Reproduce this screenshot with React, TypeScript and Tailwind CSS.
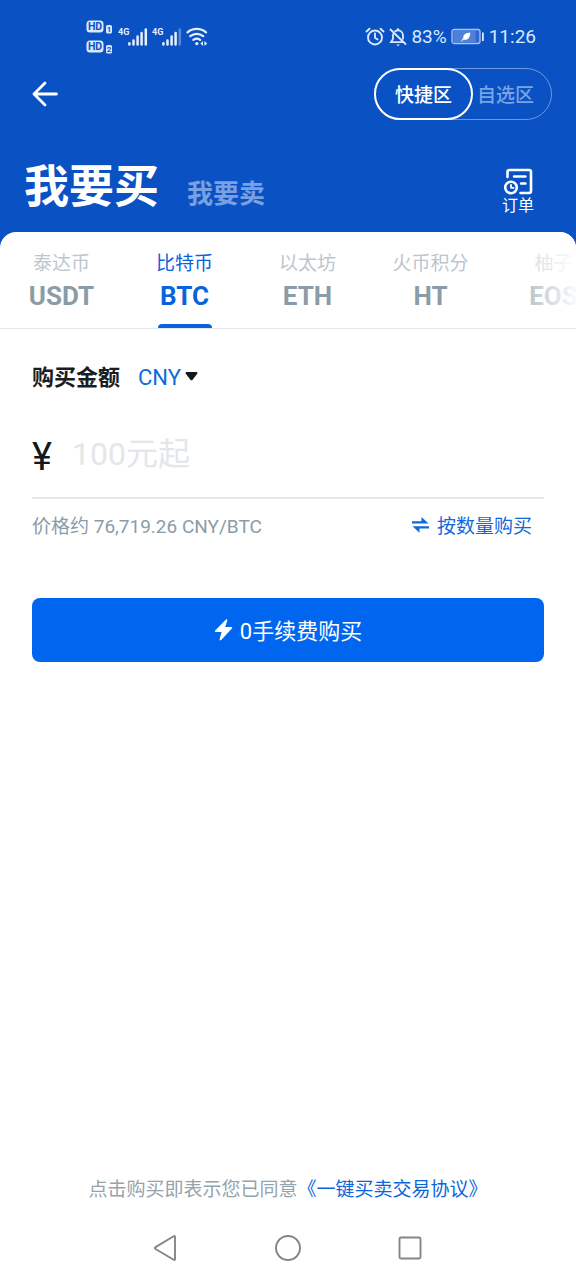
import { useState } from 'react';
import clsx from 'clsx';

const COINS = [
  { name: '泰达币', code: 'USDT' },
  { name: '比特币', code: 'BTC' },
  { name: '以太坊', code: 'ETH' },
  { name: '火币积分', code: 'HT' },
  { name: '柚子', code: 'EOS' },
];

function HdBadge({ sim }: { sim: string }) {
  return (
    <svg width="28" height="14" viewBox="0 0 28 14" aria-label={`HD ${sim}`}>
      <rect x="0.5" y="0.5" width="17" height="12" rx="3.5" fill="#dbe8ff" />
      <text x="9" y="10.4" textAnchor="middle" fontSize="10.5" fontWeight="700" fill="#0a52c4">
        HD
      </text>
      <rect x="20" y="5" width="6" height="8.5" rx="1.5" fill="#dbe8ff" />
      <text x="23" y="12" textAnchor="middle" fontSize="8" fontWeight="700" fill="#0a52c4">
        {sim}
      </text>
    </svg>
  );
}

function Signal({ weak }: { weak?: boolean }) {
  return (
    <svg width="30" height="20" viewBox="0 0 30 20" fill="none" stroke="#e6efff" strokeWidth="2.5" strokeLinecap="round">
      <text x="0" y="8" fontSize="9" fontWeight="700" fill="#e6efff" stroke="none">
        4G
      </text>
      <path d="M11.4 17.4v-1.2M15.5 17.4v-4M19.6 17.4V9.6M23.6 17.4V6" />
      <path d="M27.8 17.4V2.4" opacity={weak ? 0.35 : 1} />
    </svg>
  );
}

function StatusBar() {
  return (
    <div className="flex h-[74px] items-center justify-between pr-10 pl-[86px]">
      <div className="flex items-center">
        <div className="flex flex-col gap-1.5 pr-1">
          <HdBadge sim="1" />
          <HdBadge sim="2" />
        </div>
        <div className="flex items-center gap-1">
          <Signal />
          <Signal weak />
          <svg width="24" height="20" viewBox="0 0 24 20" fill="none" stroke="#e6efff" strokeWidth="2.2" strokeLinecap="round">
            <path d="M1.5 5.4a14 14 0 0 1 18.5 0M4.3 9.2a10 10 0 0 1 12.9 0M7.4 12.8a5.6 5.6 0 0 1 6.7 0" />
            <circle cx="10.8" cy="16.6" r="1.7" fill="#e6efff" stroke="none" />
            <path d="M17 14v5l-2.6-2.4zM18.4 19v-5l2.8 2.6z" fill="#e6efff" stroke="none" />
          </svg>
        </div>
      </div>

      <div className="flex items-center gap-1 text-[19px] text-[#dbe8ff]">
        <svg width="20" height="20" viewBox="0 0 20 20" fill="none" stroke="currentColor" strokeWidth="1.9" strokeLinecap="round">
          <circle cx="10" cy="10.5" r="7" />
          <path d="M10 6.5v4.2l2.6 1.8M1.5 4.5l3-2.8M18.5 4.5l-3-2.8" />
        </svg>
        <svg width="18" height="20" viewBox="0 0 18 20" fill="none" stroke="currentColor" strokeWidth="1.8" strokeLinecap="round">
          <path d="M4 7.5V12l-2 3.2h11.5M6.2 4.2A5 5 0 0 1 14 7.8v4M9 1.8v1M1.5 2.5l15 14.5" />
          <path d="M7.2 17.4h3.6L9 19.2z" fill="currentColor" stroke="none" />
        </svg>
        <span>83%</span>
        <svg width="34" height="18" viewBox="0 0 34 18">
          <rect x="1" y="1.5" width="28" height="14" rx="2" fill="#2f69cf" stroke="#a9c4f2" strokeWidth="1.3" />
          <rect x="2.5" y="3" width="22" height="11" fill="#5080d8" />
          <path d="M31 4.5h1.8v8.5H31z" fill="#dbe8ff" />
          <path d="M10.3 13.300c.4-1.200 1-2.200 2-3.200-.4-3.400 2.200-5.400 7-5.400-.2 4.400-1.800 7.300-5.600 7-.9-.1-1.400-.1-1.800.1l-.8 1.800z" fill="#fff" />
        </svg>
        <span>11:26</span>
      </div>
    </div>
  );
}

function Header() {
  const [zone, setZone] = useState('fast');

  return (
    <header className="bg-[#0a52c4] pb-4">
      <StatusBar />

      <div className="-mt-1.5 flex items-center justify-between pr-6 pl-8">
        <button aria-label="返回" className="text-white">
          <svg width="26" height="26" viewBox="0 0 26 26" fill="none" stroke="currentColor" strokeWidth="2.8" strokeLinecap="round" strokeLinejoin="round">
            <path d="M13 2 2 13l11 11M2 13h22.500" />
          </svg>
        </button>
        <div className="flex h-[52px] rounded-full border border-[#6c98e0] text-[19px] font-medium">
          <button
            onClick={() => setZone('fast')}
            className={clsx(
              '-m-px rounded-full border-2 px-[19px] pt-1',
              zone === 'fast' ? 'border-white text-white' : 'border-transparent text-[#7ba3e6]',
            )}
          >
            快捷区
          </button>
          <button
            onClick={() => setZone('self')}
            className={clsx(
              '-m-px rounded-full border-2 pt-1 pr-4 pl-1',
              zone === 'self' ? 'border-white text-white' : 'border-transparent text-[#7ba3e6]',
            )}
          >
            自选区
          </button>
        </div>
      </div>

      {/* Купить / продать и заказы */}
      <div className="mt-10 flex items-end justify-between pr-[42px] pl-6">
        <div className="flex items-baseline gap-7">
          <button className="text-[45px] leading-[56px] font-bold text-white">我要买</button>
          <button className="text-[26px] leading-8 font-bold text-[#78a0e2]">我要卖</button>
        </div>
        <button className="flex flex-col items-center text-base leading-5 text-white">
          <svg width="30" height="28" viewBox="0 0 30 28" fill="none" stroke="currentColor" strokeWidth="2.6" strokeLinecap="round" strokeLinejoin="round">
            <path d="M4.500 9V4a2 2 0 0 1 2-2h19.500a2 2 0 0 1 2 2v19a2 2 0 0 1-2 2H17.500" />
            <path d="M11 8.500h11.500M18 15.500h4.500" strokeWidth="2.4" />
            <circle cx="8" cy="19.500" r="5.800" />
            <path d="M8 17v2.800h2.600" strokeWidth="1.8" />
          </svg>
          订单
        </button>
      </div>
    </header>
  );
}

export default function App() {
  const [coin, setCoin] = useState('BTC');
  const [amount, setAmount] = useState('');

  return (
    <div className="flex min-h-screen flex-col bg-white font-[Roboto,'Noto_Sans_CJK_SC',sans-serif]">
      <Header />

      <div className="bg-[#0a52c4]">
        <nav className="relative flex overflow-hidden rounded-t-2xl border-b border-[#e6e9ec] bg-white">
          {COINS.map(({ name, code }) => (
            <button
              key={code}
              onClick={() => setCoin(code)}
              className={clsx(
                'flex w-[123px] shrink-0 flex-col items-center pt-[18px]',
                coin === code ? 'text-[#0a63dc]' : 'text-[#8a9ca8]',
              )}
            >
              <span className={clsx('text-[19px] leading-7', coin !== code && 'text-[#bdc6cd]')}>{name}</span>
              <span className="text-[26px] leading-9 font-bold">{code}</span>
              <span className={clsx('mt-2.5 h-1 w-[54px] rounded-t-sm', coin === code && 'bg-[#0a63dc]')} />
            </button>
          ))}
          <div className="pointer-events-none absolute inset-y-0 right-0 w-12 bg-linear-to-r from-white/40 to-white/95" />
        </nav>
      </div>

      <main className="flex grow flex-col px-8 pt-[33px]">
        <div className="flex items-center gap-[18px] text-[22px] leading-8">
          <label htmlFor="amount" className="font-bold text-[#1a1e24]">购买金额</label>
          <div className="relative">
            <select aria-label="货币" className="w-[60px] appearance-none bg-transparent text-[#0a6ae0] outline-none">
              <option>CNY</option>
            </select>
            <svg className="pointer-events-none absolute top-2.5 right-0" width="13" height="9" viewBox="0 0 13 9" fill="#14181d">
              <path d="M1.600 0h9.800c1 0 1.400 1.100.8 1.800L7.600 7.800c-.6.700-1.600.7-2.200 0L.8 1.800C.2 1.100.6 0 1.600 0z" />
            </svg>
          </div>
        </div>

        <div className="mt-9 flex items-center gap-5 border-b-2 border-[#e6e8eb] pb-[19px]">
          <span className="pt-1.5 text-[38px] leading-10 text-[#14181d]">¥</span>
          <input
            id="amount"
            inputMode="decimal"
            value={amount}
            onChange={(e) => setAmount(e.target.value)}
            placeholder="100元起"
            className="h-12 w-full min-w-0 text-[32px] text-[#14181d] outline-none placeholder:text-[#e3e6ea]"
          />
        </div>

        <div className="mt-3.5 flex items-center justify-between pr-3 text-[19px] leading-7">
          <span className="text-[#8a9ca8]">价格约 76,719.26 CNY/BTC</span>
          <button className="flex items-center gap-2 text-[#1168dc]">
            <svg className="-mt-1" width="17" height="16" viewBox="0 0 17 16" fill="currentColor">
              <path d="M0 4.300h9.500V0L16.500 6.500H0zM17 11.400H7.500v4.300L.5 9.200H17z" />
            </svg>
            按数量购买
          </button>
        </div>

        <button className="mt-[57px] flex h-16 items-center justify-center gap-1.5 rounded-lg bg-[#0066f0] text-[22px] text-white">
          <svg width="20" height="22" viewBox="0 0 20 22" fill="currentColor">
            <path d="M12 .5c.9-.4 1.500.1 1.200 1L11.300 8h6c1 0 1.300.8.6 1.500L7.200 21c-.9.800-1.900.3-1.600-.8L7.600 13H1.800c-1 0-1.300-.8-.6-1.500z" />
          </svg>
          <span className="pt-0.5">0手续费购买</span>
        </button>

        <p className="mt-auto text-center text-[19px] leading-7 text-[#95a3ae]">
          点击购买即表示您已同意<a href="#agreement" className="text-[#0a66dc]">《一键买卖交易协议》</a>
        </p>
      </main>

      {/* Системная навигация */}
      <div className="flex h-[76px] items-center justify-between px-[152px] pt-3 text-[#858585]">
        <button aria-label="后退">
          <svg width="28" height="28" viewBox="0 0 28 28" fill="none" stroke="currentColor" strokeWidth="1.9" strokeLinejoin="round">
            <path d="M23 3v22c0 .8-.6 1.200-1.300.8L3.500 15c-.8-.5-.8-1.400 0-1.900L21.700 2.200c.7-.4 1.300 0 1.300.8z" />
          </svg>
        </button>
        <button aria-label="主页">
          <svg width="28" height="28" viewBox="0 0 28 28" fill="none" stroke="currentColor" strokeWidth="1.9">
            <circle cx="14" cy="14" r="12" />
          </svg>
        </button>
        <button aria-label="最近任务">
          <svg width="28" height="28" viewBox="0 0 28 28" fill="none" stroke="currentColor" strokeWidth="1.9">
            <rect x="3.500" y="3.500" width="21" height="21" rx="1.500" />
          </svg>
        </button>
      </div>
    </div>
  );
}
